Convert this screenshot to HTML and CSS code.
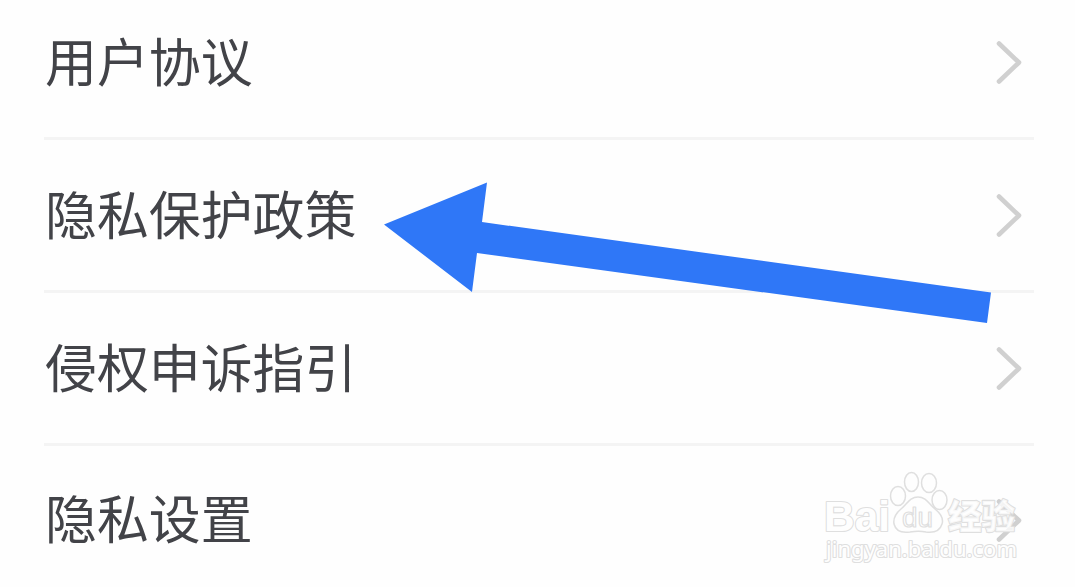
FILE: index.html
```html
<!DOCTYPE html>
<html lang="zh-CN">
<head>
  <meta charset="UTF-8" />
  <meta name="viewport" content="width=device-width, initial-scale=1.0" />
  <title>隐私</title>
  <link rel="stylesheet" href="styles.css">
</head>
<body>
  <ul class="menu">
    <li class="menu-item">
      <span class="label">用户协议</span>
      <svg class="chevron" viewBox="0 0 28 46"><path d="M4 4.500 L24 23.500 L4 42.500" /></svg>
    </li>
    <li class="menu-item">
      <span class="label">隐私保护政策</span>
      <svg class="chevron" viewBox="0 0 28 46"><path d="M4 4.500 L24 23.500 L4 42.500" /></svg>
    </li>
    <li class="menu-item">
      <span class="label">侵权申诉指引</span>
      <svg class="chevron" viewBox="0 0 28 46"><path d="M4 4.500 L24 23.500 L4 42.500" /></svg>
    </li>
    <li class="menu-item">
      <span class="label">隐私设置</span>
      <svg class="chevron" viewBox="0 0 28 46"><path d="M4 4.500 L24 23.500 L4 42.500" /></svg>
    </li>
  </ul>

  <!-- Arrow pointing at the privacy policy row -->
  <svg class="arrow" viewBox="0 0 608 112">
    <polygon points="0,43.500 103,1.500 98,41 607,111.500 603,142 93,72 88,111" />
  </svg>

  <!-- Watermark -->
  <svg class="watermark" viewBox="0 0 210 100">
    <g class="paw">
      <ellipse cx="78" cy="26" rx="7.500" ry="9.500" />
      <ellipse cx="91.500" cy="12" rx="7" ry="9.500" />
      <ellipse cx="109" cy="13" rx="7.500" ry="9.500" />
      <ellipse cx="119.500" cy="30" rx="7.500" ry="9.500" />
      <path d="M98 27 C90 27 87 34 81 39 C75 44 73 48 74 54 C76 62 83 63 90 62 C96 61 101 61 106 62 C114 63 120 61 122 54 C124 48 120 43 115 39 C109 34 106 27 98 27 Z" />
    </g>
    <text class="wm-brand" x="4" y="61" textLength="66" lengthAdjust="spacingAndGlyphs">Bai</text>
    <text class="wm-du" x="82" y="57" textLength="31" lengthAdjust="spacingAndGlyphs">du</text>
    <text class="wm-cn" x="128" y="59" textLength="67" lengthAdjust="spacingAndGlyphs">经验</text>
    <text class="wm-url" x="6" y="87" textLength="191" lengthAdjust="spacingAndGlyphs">jingyan.baidu.com</text>
  </svg>
</body>
</html>
```

FILE: styles.css
```css
html, body {
  margin: 0;
  padding: 0;
  height: 100%;
  overflow: hidden;
  background: #fefefe;
  font-family: "Noto Sans CJK SC", sans-serif;
}

body {
  position: relative;
}

.menu {
  list-style: none;
  margin: -13px 41px 0 44px;
  padding: 0;
}

.menu-item {
  display: flex;
  align-items: center;
  justify-content: space-between;
  box-sizing: border-box;
  height: 153px;
  padding: 0 11px 0 1px;
  border-bottom: 3px solid #f4f4f4;
}

.menu-item:last-child {
  height: 150px;
  border-bottom-color: transparent;
}

.label {
  padding-bottom: 5px;
  font-size: 51.9px;
  line-height: 1;
  color: #424348;
}

.chevron {
  width: 28px;
  height: 46px;
  fill: none;
  stroke: #d0d0d0;
  stroke-width: 4.6;
  stroke-linecap: round;
  stroke-linejoin: round;
}

.arrow {
  position: absolute;
  left: 384px;
  top: 181px;
  width: 608px;
  height: 112px;
  overflow: visible;
  fill: #2f77f7;
}

.watermark {
  position: absolute;
  left: 820px;
  top: 470px;
  width: 210px;
  height: 100px;
  fill: #fefefe;
  stroke: #dfdfdf;
  stroke-width: 1.5;
  stroke-linejoin: round;
}

.watermark text {
  paint-order: stroke;
  stroke-width: 2.2;
}

.wm-brand {
  font: bold 43px "Liberation Sans", sans-serif;
}

.watermark .wm-du {
  font: 28px "Liberation Sans", sans-serif;
  paint-order: normal;
  stroke-width: 1.2;
}

.wm-cn {
  font: 900 34px "Noto Sans CJK SC", sans-serif;
  fill-opacity: 0.8;
}

.wm-url {
  font: 22px "Noto Sans", sans-serif;
}
```
